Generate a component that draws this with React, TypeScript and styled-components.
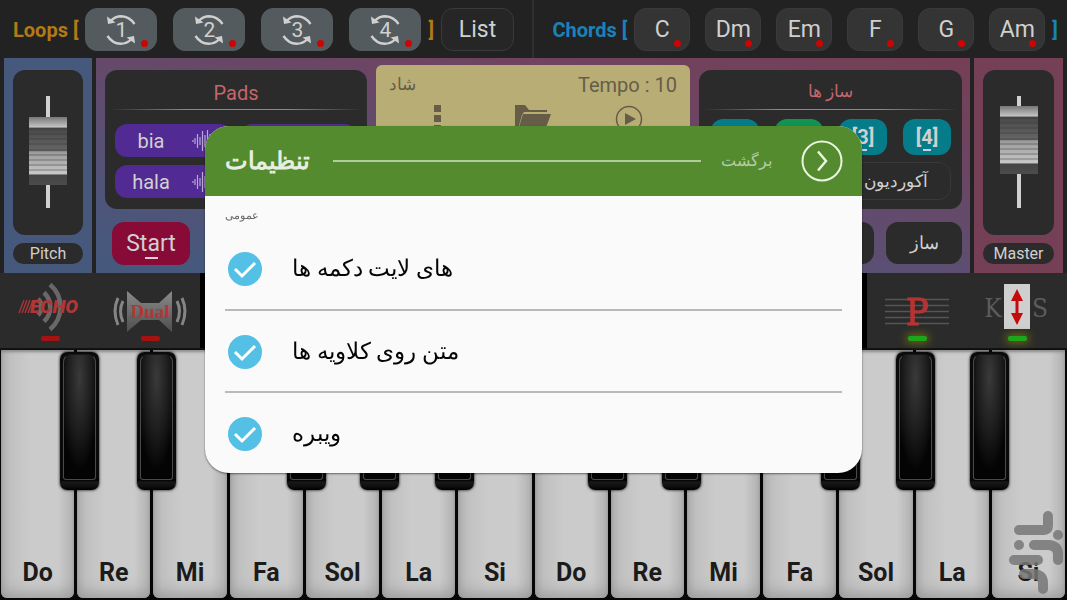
import React from 'react';
import styled, { createGlobalStyle } from 'styled-components';

const uiFont = 'Roboto, "Liberation Sans", serif';

const GlobalStyle = createGlobalStyle`
  *, *::before, *::after { box-sizing: border-box; }
  body { margin: 0; background: #222; font-family: ${uiFont}; color: #d0d0d0; }
  button { font: inherit; color: inherit; border: 0; padding: 0; margin: 0; cursor: pointer; }
`;

const Page = styled.div`
  min-height: 100vh;
  display: flex;
  flex-direction: column;
  background: #222;
  overflow: hidden;
`;

/* ---------- top bar ---------- */

const TopBar = styled.header`
  display: grid;
  grid-template-columns: 1fr 1fr;
  height: 58px;
  flex: none;
`;

const BarHalf = styled.div<{ $divided?: boolean }>`
  display: flex;
  align-items: center;
  gap: 7px;
  padding: 0 8px 0 ${p => (p.$divided ? 13 : 19)}px;
  border-right: ${p => (p.$divided ? '2px solid #303030' : '0')};
`;

const BarLabel = styled.span<{ $color: string }>`
  padding-top: 2px;
  color: ${p => p.$color};
  font-size: 20px;
  font-weight: 700;
  line-height: 24px;
  white-space: pre;
`;

const ButtonGroup = styled.div<{ $gap: number }>`
  display: flex;
  gap: ${p => p.$gap}px;
`;

const PadButton = styled.button<{ $kind: 'loop' | 'list' | 'chord' }>`
  position: relative;
  display: grid;
  place-items: center;
  height: 43px;
  width: ${p => (p.$kind === 'chord' ? 56 : p.$kind === 'list' ? 73 : 72)}px;
  padding-top: 2px;
  border-radius: 12px;
  font-size: 23px;
  line-height: 28px;
  color: #d0d0d0;
  background: ${p => (p.$kind === 'loop' ? '#545b5e' : p.$kind === 'list' ? '#262626' : '#343434')};
  border: 1px solid ${p => (p.$kind === 'loop' ? '#545b5e' : '#3a3a3a')};
`;

const RedDot = styled.span`
  position: absolute;
  right: 8px;
  bottom: 3px;
  width: 7px;
  height: 7px;
  border-radius: 50%;
  background: #cc0404;
`;

const LoopIcon = styled.svg`
  grid-area: 1 / 1;
  width: 32px;
  height: 32px;
`;

const LoopNumber = styled.span`
  grid-area: 1 / 1;
  font-size: 21px;
  line-height: 28px;
`;

/* ---------- panels ---------- */

const Panels = styled.main`
  display: grid;
  grid-template-columns: 88px minmax(0, 1fr) 89px;
  gap: 4px;
  height: 215px;
  flex: none;
  padding: 0 4px;
`;

const SidePanel = styled.section<{ $bg: string }>`
  display: flex;
  flex-direction: column;
  gap: 8px;
  padding: 12px 9px 9px;
  background: ${p => p.$bg};
`;

const SliderWell = styled.div`
  flex: 1;
  border-radius: 12px;
  background: #2b2b2b;
  display: flex;
  justify-content: center;
`;

const SideLabel = styled.span`
  height: 21px;
  border-radius: 11px;
  background: #2b2b2b;
  font-size: 16px;
  line-height: 22px;
  text-align: center;
`;

const MainPanel = styled.section`
  display: grid;
  grid-template-columns: 262px minmax(0, 1fr) 263px;
  grid-template-rows: 139px 43px;
  column-gap: 9px;
  row-gap: 13px;
  padding: 12px 8px 8px 9px;
  background: linear-gradient(10deg, #46587c 8%, #5b4f73 40%, #70435f 78%, #753f55);
`;

const Card = styled.div`
  border-radius: 12px;
  background: #2b2b2b;
`;

const CardTitle = styled.h2<{ $small?: boolean }>`
  margin: 0 5px;
  height: 40px;
  color: #c4666c;
  font-size: ${p => (p.$small ? 17 : 20)}px;
  font-weight: 400;
  line-height: ${p => (p.$small ? 42 : 46)}px;
  text-align: center;
  border-bottom: 1px solid;
  border-image: linear-gradient(90deg, #2b2b2b, #8a8a8a 30%, #8a8a8a 70%, #2b2b2b) 1;
`;

const PadGrid = styled.div`
  display: grid;
  grid-template-columns: 1fr 1fr;
  gap: 8px;
  padding: 14px 10px;
`;

const PurplePad = styled.button`
  height: 33px;
  border-radius: 12px;
  background: #512a93;
  display: flex;
  align-items: center;
  justify-content: space-between;
  padding: 0 16px 0 12px;
  font-size: 20px;
  line-height: 24px;
`;

const PadText = styled.span`
  width: 48px;
  text-align: center;
`;

const Display = styled.div`
  margin: -5px 0;
  height: 140px;
  border-radius: 6px;
  background: #b9ad76;
  color: #655d48;
  padding: 6px 13px;
`;

const DisplayHead = styled.div`
  display: flex;
  justify-content: space-between;
  font-size: 20px;
  line-height: 28px;
`;

const Mood = styled.span`
  font-size: 17px;
  line-height: 26px;
`;

const DisplayIcons = styled.div`
  display: grid;
  grid-template-columns: repeat(3, 1fr);
  justify-items: center;
  padding-top: 6px;
`;

const SlotRow = styled.div`
  display: flex;
  justify-content: space-between;
  padding: 9px 11px 7px 12px;
`;

const Slot = styled.button<{ $on?: boolean }>`
  display: flex;
  flex-direction: column;
  align-items: center;
  width: 48px;
  height: 36px;
  padding: 7px 0 4px;
  border-radius: 12px;
  background: ${p => (p.$on ? '#129451' : '#057c8a')};
  font-size: 20px;
  font-weight: 700;
  line-height: 23px;

  &::after { content: ''; width: 8px; height: 2px; margin-top: auto; background: #d0d0d0; }
`;

const Instrument = styled.button`
  display: block;
  width: 240px;
  height: 38px;
  margin: 0 12px;
  padding: 0 22px;
  border: 1px solid #383838;
  border-radius: 12px;
  background: #2b2b2b;
  font-size: 17px;
  line-height: 34px;
  text-align: right;
`;

const StartButton = styled.button`
  display: flex;
  flex-direction: column;
  align-items: center;
  width: 78px;
  height: 43px;
  margin-left: 7px;
  padding-top: 9px;
  border-radius: 12px;
  background: #880a37;
  font-size: 23px;
  line-height: 26px;

  &::after { content: ''; width: 13px; height: 2px; background: #e0d0d5; }
`;

const RightActions = styled.div`
  grid-column: 3;
  display: flex;
  justify-content: flex-end;
  gap: 12px;
`;

const DarkButton = styled.button<{ $wide?: boolean }>`
  width: ${p => (p.$wide ? 100 : 76)}px;
  height: 42px;
  border-radius: 12px;
  background: #2b2b2b;
  font-size: 18px;
  line-height: 42px;
`;

/* ---------- effects strip ---------- */

const Effects = styled.div`
  display: flex;
  justify-content: space-between;
  height: 77px;
  flex: none;
  background: #000;
  border-bottom: 2px solid #111;
`;

const EffectGroup = styled.div`
  display: flex;
  background: #2b2b2b;
`;

const EffectButton = styled.button`
  width: 100px;
  background: none;
  display: flex;
  flex-direction: column;
  align-items: center;
  padding-top: 7px;

  & > svg { flex: none; overflow: visible; }
`;

const Led = styled.span<{ $on?: boolean }>`
  width: 19px;
  height: 5px;
  border-radius: 2px;
  background: ${p => (p.$on ? '#1ca61c' : '#a51212')};
  box-shadow: ${p => (p.$on ? '0 0 8px 2px rgba(150, 150, 0, 0.6)' : 'none')};
`;

/* ---------- keyboard ---------- */

const Keyboard = styled.div`
  flex: 1;
  display: grid;
  grid-template-columns: repeat(14, minmax(0, 1fr));
  gap: 3px;
  min-height: 250px;
  padding: 0 2px 2px 1px;
  background: #060606;
`;

const WhiteKey = styled.button`
  position: relative;
  display: flex;
  align-items: flex-end;
  justify-content: center;
  padding-bottom: 7px;
  border-radius: 0 0 6px 6px;
  background: linear-gradient(90deg, #b0b0b0, #c0c0c0 12%, #cbcbcb 40%, #cbcbcb 78%, #b4b4b4);
  box-shadow: inset 0 2px 3px #8a8a8a, inset 0 -10px 16px -6px #999;
  color: #1b1b1b;
  font-size: 25px;
  font-weight: 700;
  line-height: 36px;
`;

const BlackKey = styled.span<{ $shift: number }>`
  position: absolute;
  z-index: 1;
  top: 2px;
  left: calc(100% - 17px + ${p => p.$shift}px);
  width: 39px;
  height: 138px;
  padding: 2px 3px 10px;
  border-radius: 7px;
  background: linear-gradient(#0a0a0a 126px, #000 128px, #181818 130px, #101010 134px, #000);
  box-shadow: 0 0 3px #000;

  &::before {
    content: '';
    display: block;
    height: 100%;
    border: 1px solid #4a4a4a;
    border-top-color: #181818;
    border-radius: 8px 8px 3px 3px;
    background: radial-gradient(ellipse 65% 75% at 50% 18%, #3a3a3a, #1c1c1c 60%, #040404);
  }
`;

const Watermark = styled.svg`
  position: absolute;
  z-index: 2;
  right: 0;
  bottom: 4px;
  width: 58px;
  height: 86px;
  pointer-events: none;
`;

/* ---------- dialog ---------- */

const Overlay = styled.div`
  position: fixed;
  inset: 0;
  z-index: 10;
  display: flex;
  align-items: center;
  justify-content: center;
  padding-bottom: 2px;
`;

const Dialog = styled.div`
  width: 90%;
  max-width: 657px;
  border-radius: 24px;
  overflow: hidden;
  background: #fafafa;
  box-shadow: 0 1px 2px rgba(0, 0, 0, 0.5);
`;

const DialogHead = styled.div`
  display: flex;
  align-items: center;
  height: 70px;
  padding: 0 19px 0 20px;
  background: #558b2f;
`;

const DialogTitle = styled.h1`
  margin: 0;
  width: 88px;
  color: #e6eee0;
  font-size: 24px;
  font-weight: 700;
  line-height: 40px;
  white-space: nowrap;
`;

const HeadLine = styled.span`
  flex: 1;
  height: 2px;
  margin: 0 20px;
  background: #b2cca0;
`;

const BackButton = styled.button`
  display: flex;
  align-items: center;
  justify-content: space-between;
  width: 122px;
  background: none;
  color: #b5cca5;
  font-size: 16px;
  line-height: 40px;
`;

const DialogBody = styled.div`
  padding: 0 20px;
`;

const Category = styled.h2`
  margin: 0;
  height: 31px;
  color: #686868;
  font-size: 11px;
  font-weight: 400;
  line-height: 40px;
`;

const Setting = styled.label`
  display: flex;
  align-items: center;
  gap: 30px;
  height: 82px;
  padding: 2px 0 0 3px;
  color: #050505;
  font-size: 23px;
  line-height: 40px;
  cursor: pointer;

  & + & { border-top: 2px solid #b9b9b9; }
`;

const CheckWrap = styled.span`
  display: grid;
  width: 34px;
  height: 34px;

  & > * { grid-area: 1 / 1; }
  & svg { pointer-events: none; opacity: 0; }
  & input:checked + svg { opacity: 1; }
`;

const Check = styled.input`
  appearance: none;
  margin: 0;
  border-radius: 50%;
  border: 2px solid #55c0e6;
  &:checked { background: #55c0e6; }
`;

/* ---------- drawings ---------- */

const Loop = ({ n }: { n: number }) => (
  <PadButton $kind="loop">
    <LoopIcon viewBox="0 0 32 32" fill="none" stroke="#d0d0d0" strokeWidth="2.4">
      <path d="M5.5 7Q10 2.200 16.500 2.200Q24.500 2.500 29.500 10" />
      <path d="M2 2.500L3 10L10.500 8.500Z" fill="#d0d0d0" stroke="none" />
      <path d="M26.500 25Q22 29.800 15.500 29.800Q7.500 29.500 2.500 22" />
      <path d="M30 29.500L29 22L21.500 23.500Z" fill="#d0d0d0" stroke="none" />
    </LoopIcon>
    <LoopNumber>{n}</LoopNumber>
    <RedDot />
  </PadButton>
);

const Wave = () => (
  <svg width="24" height="24" viewBox="0 0 24 24" stroke="#b9a8d8" strokeWidth="1.2">
    <path d="M1 11v2M3 9v6M5.500 5v14M8 8v8M10.500 2v20M13 6v12M15.500 1v22M18 5v14M20.500 8v8M23 11v2" />
  </svg>
);

const faderGrooves = [12, 17, 22, 27, 33, 38, 43, 48, 53];

const Fader = ({ knobTop, id }: { knobTop: number; id: string }) => (
  <svg width="40" height="163" viewBox="0 0 40 163" role="img" aria-label={id}>
    <defs>
      <linearGradient id={id + 'Knob'} x1="0" y1="0" x2="0" y2="1">
        <stop offset="0" stopColor="#777" />
        <stop offset="0.15" stopColor="#c4c4c4" />
        <stop offset="0.16" stopColor="#484848" />
        <stop offset="0.5" stopColor="#666" />
        <stop offset="0.51" stopColor="#9a9a9a" />
        <stop offset="0.84" stopColor="#c8c8c8" />
        <stop offset="0.85" stopColor="#444" />
        <stop offset="1" stopColor="#4c4c4c" />
      </linearGradient>
    </defs>
    <rect x="18" y="26" width="4" height="112" fill="#d0d0d0" />
    <rect x="1" y={knobTop} width="38" height="68" fill={`url(#${id}Knob)`} />
    <path
      d={faderGrooves.map(y => `M1 ${knobTop + y}h38`).join('')}
      stroke="#333"
      strokeOpacity="0.5"
    />
  </svg>
);

const EchoIcon = () => (
  <svg width="64" height="56" viewBox="0 0 64 56">
    <g fill="none" stroke="#686868" strokeWidth="4.5">
      <path d="M20 19A11 11 0 0 1 20 35" />
      <path d="M26 12.500A20 20 0 0 1 26 41.500" />
      <path d="M32 4.500A29.500 29.500 0 0 1 32 49.500" />
    </g>
    <path d="M1 33l5-13M4 33l5-13M7 33l5-13M10 33l5-13" stroke="#a83535" strokeWidth="1.4" />
    <text x="12" y="33" fontFamily="Roboto" fontSize="19" fontWeight="900" fontStyle="italic" fill="#b23636">ECHO</text>
  </svg>
);

const DualIcon = () => (
  <svg width="74" height="56" viewBox="0 0 74 56">
    <defs>
      <linearGradient id="horn" x1="0" y1="0" x2="0" y2="1">
        <stop offset="0" stopColor="#8a8a8a" />
        <stop offset="1" stopColor="#4e4e4e" />
      </linearGradient>
    </defs>
    <path d="M14 11L28 23H46L59 11V52L46 40H28L14 52Z" fill="url(#horn)" />
    <g fill="none" stroke="#858585" strokeWidth="3">
      <path d="M10 21q-5 10 0 21M5 18q-6 13 0 27M64 21q5 10 0 21M69 18q6 13 0 27" />
    </g>
    <text x="37" y="38" textAnchor="middle" fontFamily="Liberation Serif" fontSize="19" fontWeight="700" fill="#b23636">Dual</text>
  </svg>
);

const PedalIcon = () => (
  <svg width="64" height="56" viewBox="0 0 64 56">
    <path d="M0 19.500h64M0 25.500h64M0 31.500h64M0 37.500h64M0 43.500h64" stroke="#555" strokeWidth="1.5" />
    <text x="32" y="45" textAnchor="middle" fontFamily="DejaVu Serif Condensed, DejaVu Serif" fontSize="38" fill="#b83232" stroke="#b83232">P</text>
  </svg>
);

const KeySplitIcon = () => (
  <svg width="64" height="56" viewBox="0 0 64 56">
    <text x="8" y="37" textAnchor="middle" fontFamily="DejaVu Serif Condensed, DejaVu Serif" fontSize="26" fill="#5c5c5c">K</text>
    <text x="55" y="37" textAnchor="middle" fontFamily="DejaVu Serif Condensed, DejaVu Serif" fontSize="26" fill="#5c5c5c">S</text>
    <rect x="19" y="4" width="26" height="45" fill="#cfcfcf" />
    <path d="M32 9l6 12h-4.500v12H38l-6 12l-6-12h4.500V21H26z" fill="#c40a0a" />
  </svg>
);

const More = () => (
  <svg width="8" height="30" viewBox="0 0 8 30" fill="#655d48">
    <path d="M1 0h7v7H1zM1 10h7v7H1zM1 20h7v7H1z" />
  </svg>
);

const Folder = () => (
  <svg width="38" height="30" viewBox="0 0 38 30">
    <path d="M1 0h10l4 5h18v2H10l-2 3L3 27H1z" fill="#655d48" />
    <path d="M9 9h28l-7 19H3z" fill="#655d48" />
  </svg>
);

const Play = () => (
  <svg width="28" height="28" viewBox="0 0 28 28">
    <circle cx="14" cy="14" r="12.500" fill="none" stroke="#655d48" strokeWidth="1.5" />
    <path d="M10 8l11 6l-11 6z" fill="#655d48" />
  </svg>
);

const loops = [1, 2, 3, 4];
const chords = ['C', 'Dm', 'Em', 'F', 'G', 'Am'];
const keys: { note: string; black?: number }[] = [
  { note: 'Do', black: 3 }, { note: 'Re', black: 4 }, { note: 'Mi' },
  { note: 'Fa', black: 1 }, { note: 'Sol', black: -2 }, { note: 'La', black: -3 }, { note: 'Si' },
  { note: 'Do', black: -3 }, { note: 'Re', black: -5 }, { note: 'Mi' },
  { note: 'Fa', black: 2 }, { note: 'Sol', black: 0 }, { note: 'La', black: -2 }, { note: 'Si' },
];
const settings = ['های لایت دکمه ها', 'متن روی کلاویه ها', 'ویبره'];

export default function App() {
  return (
    <Page>
      <GlobalStyle />
      <TopBar>
        <BarHalf $divided>
          <BarLabel $color="#b27a16">Loops [</BarLabel>
          <ButtonGroup $gap={16}>{loops.map(n => <Loop key={n} n={n} />)}</ButtonGroup>
          <BarLabel $color="#b27a16">]</BarLabel>
          <PadButton $kind="list">List</PadButton>
        </BarHalf>
        <BarHalf>
          <BarLabel $color="#1b82b8">Chords [</BarLabel>
          <ButtonGroup $gap={15}>
            {chords.map(c => (
              <PadButton $kind="chord" key={c}>{c}<RedDot /></PadButton>
            ))}
          </ButtonGroup>
          <BarLabel $color="#1b82b8">]</BarLabel>
        </BarHalf>
      </TopBar>

      <Panels>
        <SidePanel $bg="#46587c">
          <SliderWell><Fader id="pitch" knobTop={47} /></SliderWell>
          <SideLabel>Pitch</SideLabel>
        </SidePanel>
        <MainPanel>
          <Card>
            <CardTitle>Pads</CardTitle>
            <PadGrid>
              <PurplePad><PadText>bia</PadText><Wave /></PurplePad>
              <PurplePad aria-label="Pad 2" />
              <PurplePad><PadText>hala</PadText><Wave /></PurplePad>
              <PurplePad aria-label="Pad 4" />
            </PadGrid>
          </Card>
          <Display>
            <DisplayHead><Mood>شاد</Mood><span>Tempo : 10</span></DisplayHead>
            <DisplayIcons><More /><Folder /><Play /></DisplayIcons>
          </Display>
          <Card>
            <CardTitle $small>ساز ها</CardTitle>
            <SlotRow>
              <Slot aria-label="Slot 1" />
              <Slot $on aria-label="Slot 2" />
              <Slot>[3]</Slot>
              <Slot>[4]</Slot>
            </SlotRow>
            <Instrument>آکوردیون</Instrument>
          </Card>
          <StartButton>Start</StartButton>
          <RightActions>
            <DarkButton $wide aria-label="Style" />
            <DarkButton>ساز</DarkButton>
          </RightActions>
        </MainPanel>
        <SidePanel $bg="#753f55">
          <SliderWell><Fader id="master" knobTop={36} /></SliderWell>
          <SideLabel>Master</SideLabel>
        </SidePanel>
      </Panels>

      <Effects>
        <EffectGroup>
          <EffectButton aria-label="Echo"><EchoIcon /><Led /></EffectButton>
          <EffectButton aria-label="Dual"><DualIcon /><Led /></EffectButton>
        </EffectGroup>
        <EffectGroup>
          <EffectButton aria-label="Pedal"><PedalIcon /><Led $on /></EffectButton>
          <EffectButton aria-label="Key split"><KeySplitIcon /><Led $on /></EffectButton>
        </EffectGroup>
      </Effects>

      <Keyboard>
        {keys.map((k, i) => (
          <WhiteKey key={i}>
            {k.note}
            {k.black !== undefined && <BlackKey $shift={k.black} />}
            {i === keys.length - 1 && (
              <Watermark viewBox="0 0 58 86" fill="none" stroke="#777" strokeOpacity="0.85" strokeWidth="10" strokeLinecap="round" strokeLinejoin="round">
                <path d="M12 22H37Q41 22 41 18V8M27 37H42Q51 38 51 46V52M7 52H31M17 66H27Q36 67 36 75V81M12 37h0M51 27h0" />
              </Watermark>
            )}
          </WhiteKey>
        ))}
      </Keyboard>

      <Overlay>
        <Dialog role="dialog" aria-label="تنظیمات">
          <DialogHead>
            <DialogTitle>تنظیمات</DialogTitle>
            <HeadLine />
            <BackButton>
              برگشت
              <svg width="42" height="42" viewBox="0 0 42 42" fill="none" stroke="#eaf5e2" strokeWidth="2">
                <circle cx="21" cy="21" r="19.500" />
                <path d="M17 11.500l8 9.500l-8 9.500" strokeWidth="2.5" />
              </svg>
            </BackButton>
          </DialogHead>
          <DialogBody>
            <Category>عمومی</Category>
            {settings.map(s => (
              <Setting key={s}>
                <CheckWrap>
                  <Check type="checkbox" defaultChecked />
                  <svg viewBox="0 0 34 34" fill="none" stroke="#fff" strokeWidth="3">
                    <path d="M7 17l7 7l13-13" />
                  </svg>
                </CheckWrap>
                {s}
              </Setting>
            ))}
          </DialogBody>
        </Dialog>
      </Overlay>
    </Page>
  );
}
